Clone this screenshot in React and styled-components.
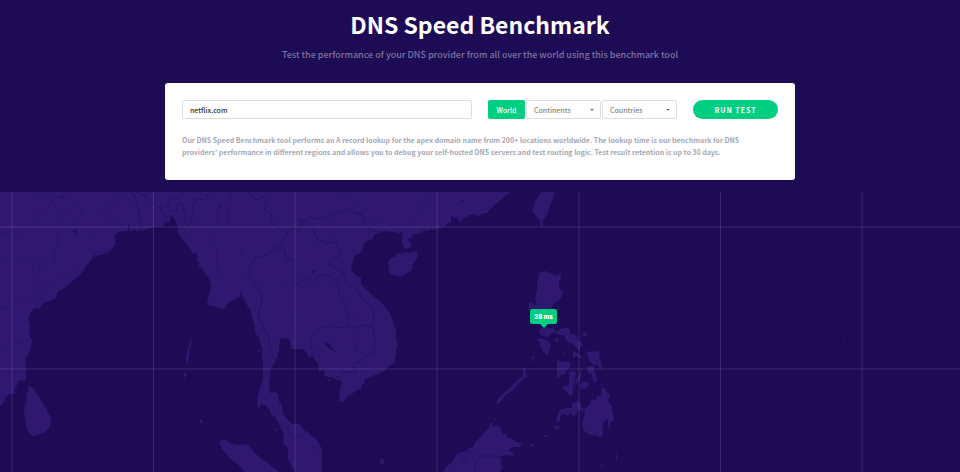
import React, { useState } from 'react';
import styled, { createGlobalStyle } from 'styled-components';

const land = [
    // mainland: India, Indochina, Malay peninsula, south China
    'M0 192H511L508 194 504 196 503 198 499 201 497 203 493 206 492 208 489 210 487 213 483 213 480 215 477 216 475 214 472 215 469 215 467 218 464 217 463 220 460 222 458 220 457 217 454 218 451 215V223L448 223 445 227 442 227 440 229 437 228 434 230 430 229 428 231 424 230 421 233 415 234 412 236 411 239 408 238V240L411 243 411 247 407 249 404 248 402 243 402 238 403 234 401 232 398 234 395 232 391 232 387 231 383 232 377 233 374 235 373 239 369 240 365 242 363 246 362 250 359 254 355 255 353 261 351 267 353 272 355 275 360 277 361 279 361 284 366 289 372 295 382 303 387 309 391 315 393 323 396 330 396 338 398 345 396 349 396 356 394 363 390 366 387 368 382 372 375 375 369 378 365 379 364 384 361 385 361 389 357 390 353 393 348 396 343 402 339 401 340 392 341 385 343 383 340 380 337 380 332 377 327 377 324 375 325 372 322 369 319 372 318 363 315 360 313 356 309 357 307 353 303 349H291L290 340 288 338 280 339 279 350 277 358 275 362 272 367 270 373 269 382 270 393 275 392 278 394 279 401 282 405 283 413 286 418 292 424 299 424 303 429 307 432 312 436 317 440 320 445 322 450 322 472H295L291 465 288 458 288 451 287 447 283 443 284 436 282 430 278 422 275 417 271 414 270 410 266 406 261 404 259 411 257 402 258 396 259 390 262 383 263 380 263 363 262 357 262 347 259 338 256 334 254 324 252 317 250 309 247 305 243 297 241 290 240 297 238 298 232 301 227 304 224 309 218 308 213 306 207 305 208 299 211 287 210 281 208 277 204 272 201 267 198 269 200 263 196 259 199 256 195 253 193 254 190 249 185 242 181 238 178 232 177 224 174 218 172 215 170 220 168 224 166 221 163 226 153 227 147 229 142 231 139 229 138 232 134 229 130 232 129 223 128 231 118 232 114 236 115 240 116 243 113 248 108 253 100 255 93 258 88 263 80 275 75 279 68 285 61 290 57 293 57 297 52 300 43 303 40 308 38 309 35 308 31 312 28 318 30 325 29 335 32 340 31 346 29 352 25 360 26 370 26 380 18 381 17 385 14 390 16 393 10 394 5 398 4 403 0 406Z',
    // Sri Lanka
    'M27 386 32 387 39 397 46 408 48 413 51 418 50 426 47 430 43 433 37 435 33 436 28 432 26 425 25 418 24 411 25 405 27 402 26 395 29 390Z',
    // Hainan, Taiwan
    'M388 262 391 258 395 257 396 254 401 253 407 252 410 253 412 251 417 252 418 256 415 261 412 265 412 270 407 273 405 275 400 277 396 275 390 274 389 270Z',
    'M541 192H555L552 201 549 208 547 215 543 220V227H541L540 221 536 216 532 211 534 205 535 202Z',
    // Luzon
    'M539 273 545 271 550 273 555 275 558 276 560 273 561 277 559 283 559 288 563 292 561 298 558 301 554 303 552 308 549 310 550 322 543 324 536 313 529 308 529 302 532 303 534 305 537 305 535 298 537 291 537 285 538 279Z',
    'M539 329 545 327 550 328 553 328 556 332 559 330 563 328 568 328 570 330 569 334 573 334 578 336 577 340 581 342 584 347 581 346 579 351 576 347 573 344 569 343 567 341 564 335 559 335 554 332 551 334 548 338 544 336 540 335Z',
    'M583 332 587 333 586 337 583 336Z',
    // Mindoro, Masbate, Samar, Leyte
    'M536 338 541 339 545 339 549 342 551 346 549 351 547 355 543 351 540 346 540 342Z',
    'M555 339 558 338 558 342 555 342ZM563 351 566 352 564 354ZM557 351 558 355 557 356Z',
    'M573 351 577 353 581 356 583 360 579 357 577 356 573 358Z',
    'M586 351 591 352 597 351 600 353 599 357 601 362 602 369 600 369 597 364 594 366 590 361 588 357Z',
    'M587 367 594 366 594 371 597 378 596 383 593 382 592 374 588 373Z',
    // Panay, Negros, Cebu, Bohol
    'M557 360 562 362 564 361 571 363 569 368 566 371 565 374 561 375 557 379Z',
    'M569 372 575 371 576 375 574 382 573 386 573 393 571 396 567 392 563 389 563 386 569 385Z',
    'M582 368 581 376 576 385 573 391 576 380 579 375Z',
    'M580 385 583 382 587 382 589 385 586 388 581 389Z',
    'M601 381 603 386 601 385ZM607 383 609 387 608 387Z',
    // Mindanao
    'M556 422 558 413 560 410 566 408 572 408 572 403 577 401 581 404 581 408 585 409 590 404 591 399 596 400 597 396 601 396 602 387 605 388 607 393 610 395 608 401 612 406 612 413 614 417 613 421 610 422 610 430 608 425 608 419 605 420 602 427 603 433 600 439 598 436 593 435 588 434 583 430 582 422 584 417 585 411 578 410 574 417 570 413 567 416 563 413 561 416 559 422Z',
    'M554 426 559 426 560 428 555 429ZM543 435 550 435 546 437 543 436ZM529 446 534 443 534 445 530 447ZM525 449 527 450 525 450ZM616 454 618 456 616 461ZM600 463 603 466 602 468Z',
    // Palawan
    'M496 403 499 398 504 393 508 390 513 385 519 379 523 376 523 371 524 366 526 372 527 377 523 379 518 384 513 390 506 395 501 401 498 404Z',
    'M531 357 534 356 535 358 532 359ZM529 361 532 359 531 362ZM493 409 495 410 493 411ZM530 377 531 377 529 379ZM535 335 538 337 535 336ZM494 418 496 419 494 420Z',
    // Borneo
    'M443 472 446 467 451 463 455 457 458 453 464 452 468 449 473 447 476 441 480 438 483 433 488 430 490 424 492 422 493 428 496 424 501 428 502 433 507 435 507 438 511 438 516 442 522 444 520 447 513 447 508 450 512 452 514 456 506 455 498 457 502 459 500 464 503 466 500 472Z',
    // Sumatra
    'M219 442 223 439 227 441 230 443 237 445 243 444 248 445 251 449 257 455 263 460 270 465 279 472H245L240 466 233 461 228 456 222 449Z',
    // Andaman and Nicobar, small islands
    'M190 338 192 341 190 348 189 356 187 365 186 359 187 352 189 347ZM184 373 186 373 186 376 184 378ZM200 419 202 420 203 424 200 423Z',
    'M328 379 331 379 330 383ZM381 458 384 460 384 463 382 465 380 461ZM275 428 278 430 275 431ZM258 350 260 349 260 354ZM279 389 280 391 279 391Z',
    'M549 261 551 262 549 262ZM555 267 556 267 556 268ZM579 193 581 193 580 195ZM842 340 845 337 845 338 842 341ZM713 416 716 414 714 417ZM855 316 856 316 856 317Z',
];

const lakes = [
    'M325 342 330 344 333 349 338 353 332 350 326 346Z',
    'M38 198 43 196 40 198ZM60 197 64 196 62 199ZM72 230 77 231 76 234ZM92 257 97 254 94 258ZM60 216 62 217 61 218ZM218 206 222 205 221 208ZM312 271 315 271 313 274ZM285 280 287 282 285 282ZM292 318 293 318 293 321ZM462 200 465 201 462 202ZM241 251 243 254 242 255ZM312 447 315 448 313 449Z',
];

const borders = [
    'M129 192 136 196 136 203 139 209 139 215 142 229M136 192 146 196 150 202 160 207 162 213 168 219 171 216',
    'M185 192 178 197 170 199 168 207 171 212 176 211 178 203 182 204 184 213 187 225 190 224 193 215 193 207 196 199 206 200 209 192M182 225 187 236M161 205 162 213 168 218',
    'M248 192 253 198 259 200 263 197 267 202 264 210 272 214 270 222 277 226 280 230 287 233 294 228 300 231 302 224 299 219 307 221 310 217 317 219 325 217 331 216 334 213 341 213 347 208 354 213 361 214 364 219 363 225 370 230 378 232 387 231',
    'M287 233 282 244 275 249 267 254 262 257 255 257 250 267 247 273 254 283 262 294 262 303 258 313 261 323 266 330 269 340 271 352 275 361 269 371 264 378',
    'M279 248 285 250 286 258 295 261 294 275 294 286 300 282 306 277 312 281 321 275 331 276 337 284 340 296 345 304 348 314 347 326 339 328 330 326 319 328 313 333 310 344 314 355',
    'M300 222 305 221 313 229 318 240 328 243 336 242 338 250 342 253 338 257 331 258 329 264 339 270 343 273 348 284 358 290 363 300 370 305 373 309 374 321 370 328 363 325 354 328 347 326M373 326 375 342 374 352 365 357 360 362 353 363 356 372 348 372 343 371 340 376 335 378',
    'M281 425 289 429 293 438 298 436 302 438 305 431',
    'M459 453 463 459 466 459 466 451 470 451 473 457M475 472 476 462 479 456 498 456 501 461',
];

const states = [
    'M0 233 10 232 18 229 22 233 29 230 34 219 42 212 49 205 57 197 70 197 78 203 82 213 76 223 65 226 58 232 57 244 54 252 55 264 47 260 43 266 33 263 32 272 37 281 43 287 36 297 27 300 17 299 10 307 0 308',
    'M50 192 52 204 60 211 72 210M128 195 116 200 107 204 101 211 109 218 119 222 126 229M0 261 7 262 17 258 29 260M77 270 67 275 57 279 47 286 40 290M4 344 9 349 15 344 23 343 29 340M0 370 9 372 20 371 25 368',
    'M89 232 93 240M112 249 100 253 92 252M231 192 229 205 229 225M219 204 216 216 219 231 212 237 217 251 217 269 221 279M336 192 345 196 352 198 356 204 351 210 362 216 373 226M430 194 424 205 419 216 411 224 407 232M345 226 353 236M376 218 382 222M328 235 338 243M343 262 349 270M354 330 356 320 351 315M355 330 354 343 356 352',
];

const meridians = [12, 153.5, 295, 437, 579, 720.5, 862];
const parallels = [227, 369];

export default function App() {
    const [domain, setDomain] = useState('netflix.com');

    return (
    <Page>
        <GlobalStyle />
        <Header>
            <Title>DNS Speed Benchmark</Title>
            <SubTitle>Test the performance of your DNS provider from all over the world using this benchmark tool</SubTitle>
        </Header>
        <Card>
            <Form onSubmit={(e) => e.preventDefault()}>
                <DomainInput
                    aria-label="Domain"
                    value={domain}
                    onChange={(e) => setDomain(e.target.value)}
                />
                <Filters>
                    <WorldButton type="button">World</WorldButton>
                    <DropDown label="Continents" options={['Africa', 'Asia', 'Europe']} />
                    <DropDown label="Countries" options={['Japan', 'Philippines', 'Vietnam']} />
                </Filters>
                <RunButton type="submit">RUN TEST</RunButton>
            </Form>
            <Description>
                Our DNS Speed Benchmark tool performs an A record lookup for the apex domain name from 200+ locations worldwide. The lookup time is our benchmark for DNS providers' performance in different regions and allows you to debug your self-hosted DNS servers and test routing logic. Test result retention is up to 30 days.
            </Description>
        </Card>
        <MapArea>
            <WorldMap />
            <Pin>28 ms</Pin>
        </MapArea>
    </Page>
    )
}

function DropDown({label, options}) {
    return (
    <SelectBox>
        <Select aria-label={label} defaultValue="">
            <option value="">{label}</option>
            {options.map((name) => <option key={name}>{name}</option>)}
        </Select>
        <Caret viewBox="0 0 4 2" aria-hidden="true">
            <path d="M0 0H4L2 2Z" fill="#777" />
        </Caret>
    </SelectBox>
    )
}

function WorldMap() {
    return (
    <MapSvg viewBox="0 192 960 280" preserveAspectRatio="xMidYMin slice" aria-hidden="true">
        <path d={land.join('')} fill="#301871" />
        <path d={lakes.join('')} fill="#1e0b56" />
        <path d={states.join('')} fill="none" stroke="#291365" strokeWidth="0.7" />
        <path d={borders.join('')} fill="none" stroke="#241060" strokeWidth="0.9" strokeLinejoin="round" />
        <g stroke="#fff" strokeOpacity="0.12">
            {meridians.map((x) => <path key={x} d={`M${x} 192V472`} />)}
            {parallels.map((y) => <path key={y} d={`M0 ${y}H960`} />)}
        </g>
    </MapSvg>
    )
}

const GlobalStyle = createGlobalStyle`
    * {
        box-sizing: border-box;
    }

    body {
        margin: 0;
        background: #1e0b56;
        font-family: "Noto Sans CJK SC", "Open Sans", sans-serif;
    }

    button, input, select {
        margin: 0;
        font-family: inherit;
    }
    `

const Page = styled.div`
    min-height: 100vh;
    display: flex;
    flex-direction: column;
    align-items: center;
    `

const Header = styled.header`
    padding: 8px 16px 20px;
    text-align: center;
    `

const Title = styled.h1`
    margin: 0;
    color: #fff;
    font-size: 23px;
    line-height: 32px;
    font-weight: 600;
    `

const SubTitle = styled.p`
    margin: 7px 0 0;
    color: #7d729e;
    font-size: 9px;
    line-height: 16px;
    font-weight: 500;
    `

const Card = styled.section`
    width: calc(100% - 32px);
    max-width: 630px;
    margin-bottom: 12px;
    padding: 17px 17px 22px;
    background: #fff;
    border-radius: 3px;
    `

const Form = styled.form`
    display: flex;
    gap: 16px;
    `

const DomainInput = styled.input`
    flex: 1;
    min-width: 0;
    height: 19px;
    padding: 0 7px;
    border: 1px solid #ddd;
    border-radius: 2px;
    outline: none;
    color: #333;
    font-size: 7px;
    font-weight: 500;
    `

const Filters = styled.div`
    display: flex;
    gap: 1px;
    `

const WorldButton = styled.button`
    width: 37px;
    height: 19px;
    padding: 0;
    border: 0;
    border-radius: 2px;
    background: #00ce81;
    color: #fff;
    font-size: 7px;
    font-weight: 500;
    `

const SelectBox = styled.div`
    position: relative;
    width: 75px;
    `

const Select = styled.select`
    appearance: none;
    display: block;
    width: 100%;
    height: 19px;
    padding: 0 7px;
    border: 1px solid #ddd;
    border-radius: 2px;
    background: #fff;
    color: #888;
    font-size: 7px;
    font-weight: 500;
    `

const Caret = styled.svg`
    position: absolute;
    top: 9px;
    right: 7px;
    width: 4px;
    height: 2px;
    pointer-events: none;
    `

const RunButton = styled.button`
    width: 85px;
    height: 19px;
    padding: 0;
    border: 0;
    border-radius: 10px;
    background: #00ce81;
    color: #fff;
    font-size: 7px;
    font-weight: 700;
    letter-spacing: 1px;
    `

const Description = styled.p`
    margin: 15px 0 0;
    padding-right: 17px;
    color: #a5a8b4;
    font-size: 7px;
    line-height: 12px;
    font-weight: 600;
    `

const MapArea = styled.main`
    position: relative;
    flex: 1;
    width: 100%;
    min-height: 280px;
    overflow: hidden;
    `

const MapSvg = styled.svg`
    display: block;
    width: 100%;
    height: 280px;
    `

const Pin = styled.div`
    position: absolute;
    top: 117px;
    left: calc(50% + 50px);
    width: 27px;
    border-radius: 2px;
    background: #00ce81;
    color: #fff;
    font-family: Inter, sans-serif;
    font-size: 6px;
    line-height: 15px;
    font-weight: 900;
    text-align: center;

    &::after {
        content: '';
        position: absolute;
        top: 100%;
        left: 50%;
        margin-left: -4px;
        border: 4px solid transparent;
        border-top-color: #00ce81;
        border-bottom: 0;
    }
    `
